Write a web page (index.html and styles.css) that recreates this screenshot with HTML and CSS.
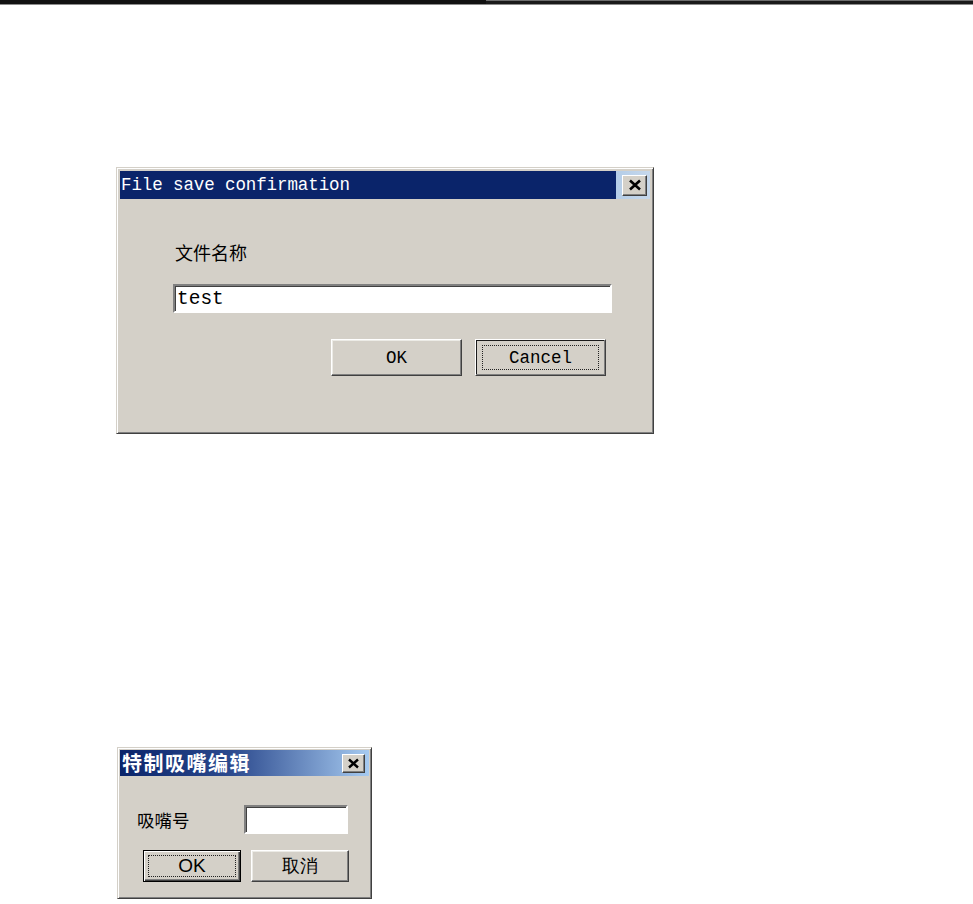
FILE: index.html
```html
<!DOCTYPE html>
<html lang="zh">
<head>
  <meta charset="UTF-8">
  <title>Dialogs</title>
  <link rel="stylesheet" href="styles.css">
</head>
<body>
  <div class="rule">
    <div class="rule-left"></div>
    <div class="rule-right"></div>
  </div>

  <div class="page">
    <div class="window save-dialog">
      <div class="titlebar">
        <span class="title">File save confirmation</span>
        <button class="close-btn" aria-label="close">
          <svg width="14" height="12" viewBox="0 0 14 12"><path d="M2 1.5 L12 10.5 M12 1.5 L2 10.5" stroke="#000" stroke-width="2.6" fill="none"/></svg>
        </button>
      </div>
      <div class="save-body">
        <div class="label">文件名称</div>
        <input class="field" type="text" value="test">
        <div class="actions">
          <button class="btn">OK</button>
          <button class="btn focused"><span class="focus-ring">Cancel</span></button>
        </div>
      </div>
    </div>

    <div class="window nozzle-dialog">
      <div class="titlebar">
        <span class="title">特制吸嘴编辑</span>
        <button class="close-btn" aria-label="close">
          <svg width="13" height="11" viewBox="0 0 13 11"><path d="M2 1.5 L11 9.5 M11 1.5 L2 9.5" stroke="#000" stroke-width="2.4" fill="none"/></svg>
        </button>
      </div>
      <div class="nozzle-body">
        <div class="row">
          <span class="label">吸嘴号</span>
          <input class="field" type="text" value="">
        </div>
        <div class="actions">
          <button class="btn default"><span class="focus-ring">OK</span></button>
          <button class="btn">取消</button>
        </div>
      </div>
    </div>
  </div>
</body>
</html>
```

FILE: styles.css
```css
:root {
  --face: #d4d0c8;
  --light: #ffffff;
  --shadow: #808080;
  --dark: #404040;
  --navy: #0a246a;
  --sky: #a6caf0;
  --cjk: "Noto Sans CJK SC", "Liberation Sans", sans-serif;
  --mono: "Liberation Mono", "DejaVu Sans Mono", monospace;
}

* {
  box-sizing: border-box;
}

body {
  margin: 0;
  background: #fff;
  font-family: var(--cjk);
  color: #000;
}

.rule {
  display: flex;
  height: 5px;
}

.rule-left {
  flex: 0 0 486px;
  background: #111;
  border-bottom: 1px solid #8c8c8c;
}

.rule-right {
  flex: 1;
  background: #1a1a1a;
  border-top: 1px solid #6e6e6e;
  border-bottom: 1px solid #8c8c8c;
}

.page {
  padding: 162px 0 0 116px;
}

/* classic raised window frame */
.window {
  background: var(--face);
  border: 1px solid;
  border-color: var(--face) var(--dark) var(--dark) var(--face);
  box-shadow: inset 1px 1px var(--light), inset -1px -1px var(--shadow);
}

.titlebar {
  display: flex;
  align-items: center;
  justify-content: space-between;
  color: #fff;
}

.close-btn {
  display: flex;
  align-items: center;
  justify-content: center;
  padding: 0;
  background: var(--face);
  border: 1px solid;
  border-color: var(--light) var(--dark) var(--dark) var(--light);
  box-shadow: inset -1px -1px var(--shadow);
}

.field {
  display: block;
  margin: 0;
  padding: 0 2px;
  background: #fff;
  border: 2px solid;
  border-color: var(--shadow) var(--light) var(--light) var(--shadow);
  box-shadow: inset 1px 1px var(--dark);
  outline: none;
  color: #000;
}

.actions {
  display: flex;
}

.btn {
  display: flex;
  align-items: center;
  justify-content: center;
  margin: 0;
  background: var(--face);
  border: 1px solid;
  border-color: var(--light) var(--dark) var(--dark) var(--light);
  box-shadow: inset -1px -1px var(--shadow), inset 1px 1px #ecebe6;
  color: #000;
  cursor: pointer;
}

.focus-ring {
  display: flex;
  align-items: center;
  justify-content: center;
  width: 100%;
  height: 100%;
  border: 1px dotted #222;
}

/* file save dialog */
.save-dialog {
  width: 538px;
  height: 267px;
  padding: 3px;
}

.save-dialog .titlebar {
  height: 28px;
  padding: 0 3px 0 1px;
  background: linear-gradient(to right, var(--navy) 0, var(--navy) 93.6%, #b4cde8 93.6%, #c6d8ec 100%);
}

.save-dialog .title {
  font-family: var(--mono);
  font-size: 17.5px;
  letter-spacing: -0.1px;
}

.save-dialog .close-btn {
  width: 25px;
  height: 21px;
}

.save-body {
  padding: 41px 0 0 53px;
}

.save-body .label {
  font-size: 18px;
  line-height: 24px;
  padding-left: 2px;
}

.save-body .field {
  width: 439px;
  height: 29px;
  margin-top: 20px;
  font-family: var(--mono);
  font-size: 19.5px;
}

.save-body .actions {
  width: 439px;
  justify-content: flex-end;
  gap: 13px;
  margin-top: 26px;
  padding-right: 6px;
}

.save-body .btn {
  width: 131px;
  height: 37px;
  padding: 0;
  font-family: var(--mono);
  font-size: 17.5px;
}

.save-body .btn.focused {
  box-shadow: inset -1px -1px var(--shadow), inset 0 0 0 1px #1a1a1a;
  padding: 5px 6px;
}

/* nozzle dialog */
.nozzle-dialog {
  width: 255px;
  height: 152px;
  margin: 313px 0 0 1px;
  padding: 2px;
}

.nozzle-dialog .titlebar {
  height: 26px;
  padding: 0 4px 0 2px;
  background: linear-gradient(to right, var(--navy) 0, #2c4a8e 45%, var(--sky) 100%);
}

.nozzle-dialog .title {
  font-size: 20px;
  font-weight: 700;
  line-height: 26px;
  letter-spacing: 1.5px;
}

.nozzle-dialog .close-btn {
  width: 23px;
  height: 19px;
}

.nozzle-body .row {
  display: flex;
  align-items: center;
  gap: 53px;
  margin-top: 29px;
  padding-left: 17px;
}

.nozzle-body .label {
  font-size: 17.5px;
  width: 54px;
}

.nozzle-body .field {
  width: 104px;
  height: 29px;
}

.nozzle-body .actions {
  gap: 10px;
  margin-top: 16px;
  padding-left: 23px;
}

.nozzle-body .btn {
  width: 98px;
  height: 32px;
  padding: 0;
  font-size: 18px;
}

.nozzle-body .btn.default {
  border-color: #000;
  box-shadow: inset 1px 1px var(--light), inset -1px -1px var(--dark), inset -2px -2px var(--shadow);
  padding: 4px;
  font-family: "Liberation Sans Narrow", "Liberation Sans", sans-serif;
  font-size: 19px;
}
```
